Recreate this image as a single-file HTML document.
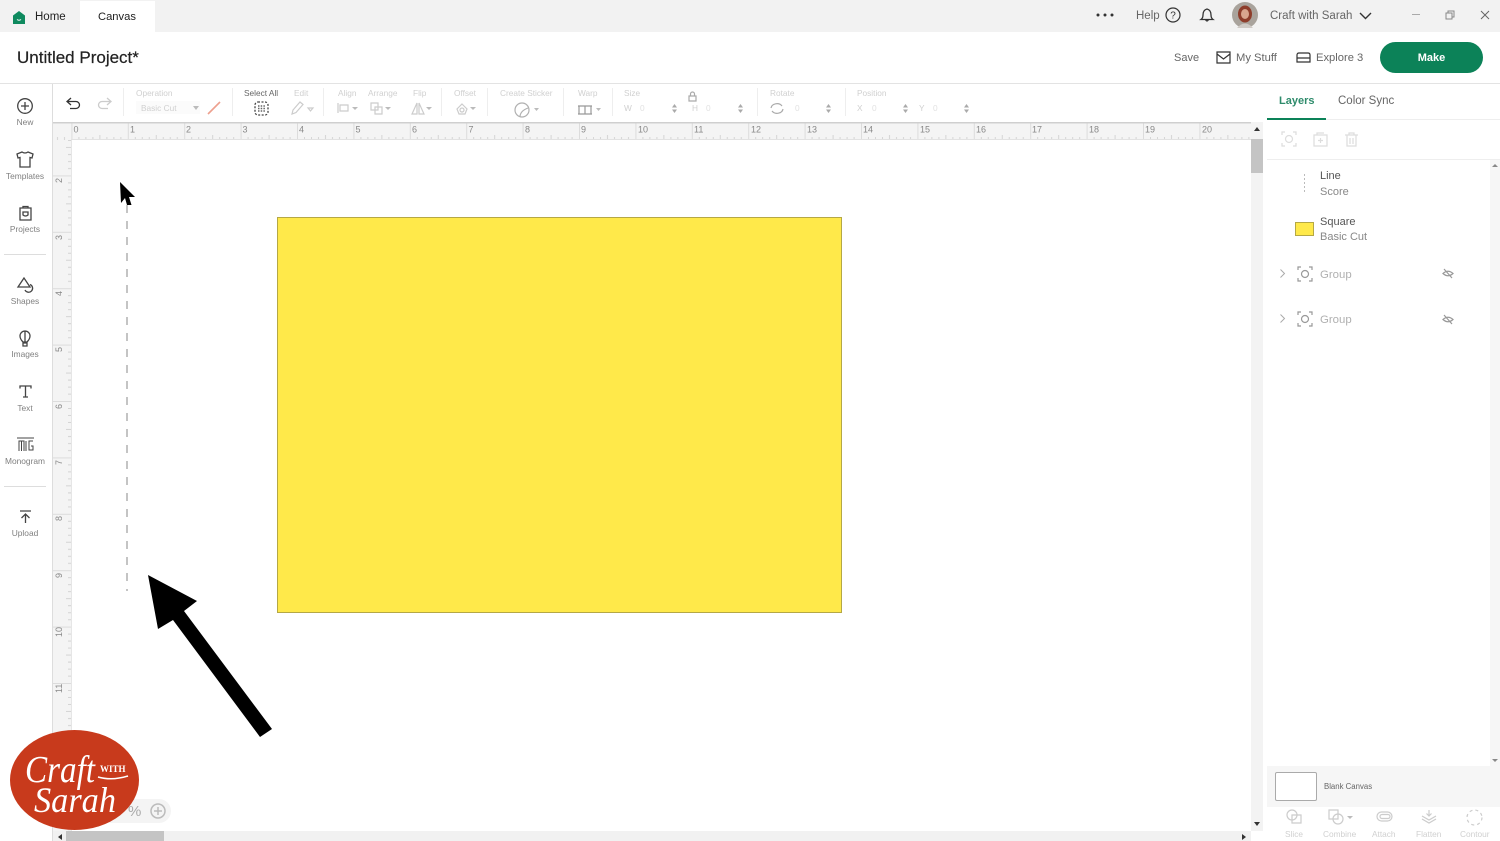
<!DOCTYPE html>
<html><head><meta charset="utf-8"><title>Untitled Project</title>
<style>
html,body{margin:0;padding:0;background:#fff}
body{width:1500px;height:841px;position:relative;overflow:hidden;font-family:"Liberation Sans",sans-serif}
.a{position:absolute}
.t{position:absolute;white-space:nowrap;line-height:1}
.lab{position:absolute;white-space:nowrap;line-height:1;font-size:8.400px;color:#808080;width:50px;left:0;text-align:center}
.tb{position:absolute;white-space:nowrap;line-height:1;font-size:8.300px;color:#d0d0d0}
svg{position:absolute;overflow:visible}
.ic{fill:none;stroke:#444;stroke-width:1.300}
.ig{fill:none;stroke:#ccc;stroke-width:1.200}
</style></head><body>
<!-- top bar -->
<div class="a" style="left:0;top:0;width:1500px;height:32px;background:#f2f2f2"></div>
<div class="a" style="left:80px;top:1px;width:75px;height:31px;background:#fff"></div>
<svg style="left:12px;top:10px" width="15" height="15" viewBox="0 0 15 15"><path d="M1 5.500L7 1l6 4.500V14H1z" fill="#0f8a5f"/><path d="M5 9.500q2 1.500 4 0" stroke="#fff" fill="none"/></svg>
<div class="t" style="left:35px;top:12px;font-size:11.500px;color:#222">Home</div>
<div class="t" style="left:98px;top:12px;font-size:11.200px;color:#222">Canvas</div>
<svg style="left:1096px;top:12px" width="18" height="6"><circle cx="2" cy="3" r="1.500" fill="#333"/><circle cx="9" cy="3" r="1.500" fill="#333"/><circle cx="16" cy="3" r="1.500" fill="#333"/></svg>
<div class="t" style="left:1136px;top:11px;font-size:11.500px;color:#666">Help</div>
<svg style="left:1165px;top:7px" width="16" height="16"><circle cx="8" cy="8" r="7" fill="none" stroke="#333" stroke-width="1.200"/><text x="8" y="11.500" font-size="10" font-family="Liberation Sans" text-anchor="middle" fill="#333">?</text></svg>
<svg style="left:1199px;top:7px" width="16" height="16" viewBox="0 0 16 16"><path class="ic" style="stroke:#333" d="M2 12.500q2-1.500 2-4.500q0-5 4-6 4 1 4 6 0 3 2 4.500zM6.500 12.500q1.500 3 3 0"/></svg>
<svg style="left:1232px;top:2px" width="26" height="26"><circle cx="13" cy="13" r="13" fill="#a9a39c"/><ellipse cx="13" cy="12" rx="7" ry="8.500" fill="#8e3d2b"/><ellipse cx="13" cy="12" rx="4" ry="5" fill="#d9a58e"/><path d="M5 26q8-9 16 0z" fill="#cfcac5"/></svg>
<div class="t" style="left:1270px;top:11px;font-size:11.500px;color:#666">Craft with Sarah</div>
<svg style="left:1359px;top:12px" width="13" height="8"><path d="M1 1l5.500 5.500L12 1" fill="none" stroke="#333" stroke-width="1.400"/></svg>
<div class="a" style="left:1412px;top:14px;width:8px;height:1px;background:#aaa"></div>
<svg style="left:1445px;top:10px" width="10" height="10"><path d="M1 3h6v6H1zM3 3V1h6v6H7" fill="none" stroke="#888"/></svg>
<svg style="left:1480px;top:10px" width="10" height="10"><path d="M1 1l8 8M9 1l-8 8" stroke="#666" stroke-width="1"/></svg>
<!-- project header -->
<div class="a" style="left:0;top:83px;width:1500px;height:1px;background:#e3e3e3"></div>
<div class="t" style="left:17px;top:49px;font-size:17px;color:#222;-webkit-text-stroke:.2px #222">Untitled Project*</div>
<div class="t" style="left:1174px;top:53px;font-size:11px;color:#666">Save</div>
<svg style="left:1216px;top:51px" width="15" height="13"><path d="M1 1h13v11H1zM1 3l6.500 5L14 3" fill="none" stroke="#333" stroke-width="1.200"/></svg>
<div class="t" style="left:1236px;top:53px;font-size:11.200px;color:#666">My Stuff</div>
<svg style="left:1296px;top:52px" width="15" height="11"><path d="M1 3q0-2 2-2h9q2 0 2 2v7H1zM1 6h13" fill="none" stroke="#333" stroke-width="1.200"/></svg>
<div class="t" style="left:1316px;top:53px;font-size:11.200px;color:#666">Explore 3</div>
<div class="a" style="left:1380px;top:42px;width:103px;height:31px;border-radius:16px;background:#0c8258"></div>
<div class="t" style="left:1380px;top:53px;width:103px;text-align:center;font-size:11px;font-weight:bold;color:#fff">Make</div>
<!-- sidebar -->
<div class="a" style="left:52px;top:84px;width:1px;height:757px;background:#ddd"></div>
<svg style="left:17px;top:98px" width="16" height="16"><circle cx="8" cy="8" r="7.300" class="ic"/><path d="M8 4v8M4 8h8" class="ic"/></svg>
<div class="lab" style="top:118px">New</div>
<svg style="left:16px;top:151px" width="18" height="17" viewBox="0 0 18 17"><path class="ic" d="M6 1L1 3l1 4 2-.5V16h10V6.500l2 .5 1-4-5-2q-3 2-6 0z"/></svg>
<div class="lab" style="top:172px">Templates</div>
<svg style="left:19px;top:205px" width="13" height="16"><path class="ic" d="M1 3h11v12H1zM4 3V1.500h5V3M4 7h5v3q-2.500 2-5 0z"/></svg>
<div class="lab" style="top:225px">Projects</div>
<div class="a" style="left:4px;top:254px;width:42px;height:1px;background:#ddd"></div>
<svg style="left:17px;top:277px" width="18" height="17"><path class="ic" d="M7 1L1 10h12zM13 7.500a4 4 0 1 1-5 5.500"/></svg>
<div class="lab" style="top:297px">Shapes</div>
<svg style="left:19px;top:330px" width="12" height="17"><path class="ic" d="M6 1a5 5 0 0 1 5 5q0 3-3 6H4Q1 9 1 6a5 5 0 0 1 5-5zM6 1v11M4 13h4v3H4z"/></svg>
<div class="lab" style="top:350px">Images</div>
<svg style="left:19px;top:385px" width="13" height="13"><path d="M1 3.500V1h11v2.500M6.500 1v11M4 12h5" fill="none" stroke="#444" stroke-width="1.300"/></svg>
<div class="lab" style="top:404px">Text</div>
<svg style="left:17px;top:437px" width="17" height="15"><path d="M0 1h17M2 14V4h2.500v10M4.500 4H7v10M9 4v10M16 4h-4v9h4V9h-2" fill="none" stroke="#444" stroke-width="1"/></svg>
<div class="lab" style="top:457px">Monogram</div>
<div class="a" style="left:4px;top:486px;width:42px;height:1px;background:#ddd"></div>
<svg style="left:19px;top:510px" width="13" height="14"><path d="M1 1h11M6.500 13V4M2.500 8l4-4 4 4" fill="none" stroke="#444" stroke-width="1.300"/></svg>
<div class="lab" style="top:529px">Upload</div>
<!-- toolbar -->
<svg style="left:66px;top:97px" width="16" height="13"><path d="M5 1L1 4.500 5 8M1 4.500h9a3.500 3.500 0 0 1 0 7H4" fill="none" stroke="#333" stroke-width="1.300"/></svg>
<svg style="left:96px;top:97px" width="16" height="13"><path d="M11 1l4 3.500L11 8M15 4.500H6a3.500 3.500 0 0 0 0 7h6" fill="none" stroke="#ccc" stroke-width="1.300"/></svg>
<div class="a" style="left:123px;top:88px;width:1px;height:28px;background:#eee"></div>
<div class="tb" style="left:136px;top:89px">Operation</div>
<div class="a" style="left:136px;top:101px;width:64px;height:13px;background:#fbfbfb"></div>
<div class="tb" style="left:141px;top:104px">Basic Cut</div>
<svg style="left:193px;top:106px" width="6" height="4"><path d="M0 0h6L3 4z" fill="#bbb"/></svg>
<svg style="left:207px;top:101px" width="14" height="14"><path d="M1 13L13 1" stroke="#eda08e" stroke-width="1.600"/></svg>
<div class="a" style="left:232px;top:88px;width:1px;height:28px;background:#eee"></div>
<div class="tb" style="left:244px;top:89px;color:#666">Select All</div>
<svg style="left:254px;top:101px" width="15" height="15"><rect x="1" y="1" width="13" height="13" rx="3" fill="none" stroke="#444" stroke-width="1.300" stroke-dasharray="2 1.500"/><path d="M4 5h7M4 7.500h7M4 10h7" stroke="#666" stroke-width="1.400" stroke-dasharray="1.500 1.200"/></svg>
<div class="tb" style="left:294px;top:89px">Edit</div>
<svg style="left:291px;top:101px" width="22" height="14"><path class="ig" d="M1 13l1-4 7-8 3 2.500-7 8zM17 7h5l-2.500 3z"/></svg>
<div class="a" style="left:323px;top:88px;width:1px;height:28px;background:#eee"></div>
<div class="tb" style="left:338px;top:89px">Align</div>
<svg style="left:337px;top:102px" width="21" height="12"><path class="ig" d="M1 1v10M3 3h8v6H3z"/><path d="M15 5h6l-3 3z" fill="#bbb"/></svg>
<div class="tb" style="left:368px;top:89px">Arrange</div>
<svg style="left:370px;top:102px" width="21" height="13"><path class="ig" d="M1 1h7v7H1zM5 5h7v7H5z"/><path d="M15 5h6l-3 3z" fill="#bbb"/></svg>
<div class="tb" style="left:413px;top:89px">Flip</div>
<svg style="left:411px;top:102px" width="21" height="13"><path class="ig" d="M6 1L1 12h5zM8 1l5 11H8z"/><path d="M15 5h6l-3 3z" fill="#bbb"/></svg>
<div class="a" style="left:441px;top:88px;width:1px;height:28px;background:#eee"></div>
<div class="tb" style="left:454px;top:89px">Offset</div>
<svg style="left:455px;top:102px" width="21" height="13"><path class="ig" d="M7 2l5 5-2 5H4L2 7z"/><circle cx="7" cy="8" r="2" class="ig"/><path d="M15 5h6l-3 3z" fill="#bbb"/></svg>
<div class="a" style="left:487px;top:88px;width:1px;height:28px;background:#eee"></div>
<div class="tb" style="left:500px;top:89px">Create Sticker</div>
<svg style="left:514px;top:102px" width="26" height="15"><circle cx="8" cy="8" r="7" class="ig" style="stroke:#b0b0b0"/><path class="ig" style="stroke:#b0b0b0" d="M6 15q0-6 8-9"/><path d="M20 6h5l-2.500 3z" fill="#bbb"/></svg>
<div class="a" style="left:563px;top:88px;width:1px;height:28px;background:#eee"></div>
<div class="tb" style="left:578px;top:89px">Warp</div>
<svg style="left:577px;top:105px" width="25" height="10"><path class="ig" style="stroke:#999" d="M1 1h14M1 9h14M2 1v8M8 1v8M14 1v8"/><path d="M19 3h5l-2.500 3z" fill="#bbb"/></svg>
<div class="a" style="left:612px;top:88px;width:1px;height:28px;background:#eee"></div>
<div class="tb" style="left:624px;top:89px">Size</div>
<svg style="left:688px;top:91px" width="9" height="11"><path d="M1 5h7v5H1zM2.500 5V3a2 2 0 0 1 4 0v2" class="ig" style="stroke:#aaa"/></svg>
<div class="tb" style="left:624px;top:104px">W</div><div class="tb" style="left:640px;top:104px;color:#e2e2e2">0</div>
<div class="tb" style="left:692px;top:104px">H</div><div class="tb" style="left:706px;top:104px;color:#e2e2e2">0</div>
<svg style="left:672px;top:104px" width="5" height="9"><path d="M0 3.500L2.500 0 5 3.500zM0 5.500L2.500 9 5 5.500z" fill="#aaa"/></svg>
<svg style="left:738px;top:104px" width="5" height="9"><path d="M0 3.500L2.500 0 5 3.500zM0 5.500L2.500 9 5 5.500z" fill="#aaa"/></svg>
<div class="a" style="left:757px;top:88px;width:1px;height:28px;background:#eee"></div>
<div class="tb" style="left:770px;top:89px">Rotate</div>
<svg style="left:770px;top:102px" width="14" height="13"><path class="ig" style="stroke:#aaa" d="M1 6a6 5 0 0 1 11-2M13 7a6 5 0 0 1-11 2"/></svg>
<div class="tb" style="left:795px;top:104px;color:#e2e2e2">0</div>
<svg style="left:826px;top:104px" width="5" height="9"><path d="M0 3.500L2.500 0 5 3.500zM0 5.500L2.500 9 5 5.500z" fill="#aaa"/></svg>
<div class="a" style="left:845px;top:88px;width:1px;height:28px;background:#eee"></div>
<div class="tb" style="left:857px;top:89px">Position</div>
<div class="tb" style="left:857px;top:104px">X</div><div class="tb" style="left:872px;top:104px;color:#e2e2e2">0</div>
<svg style="left:903px;top:104px" width="5" height="9"><path d="M0 3.500L2.500 0 5 3.500zM0 5.500L2.500 9 5 5.500z" fill="#aaa"/></svg>
<div class="tb" style="left:919px;top:104px">Y</div><div class="tb" style="left:933px;top:104px;color:#e2e2e2">0</div>
<svg style="left:964px;top:104px" width="5" height="9"><path d="M0 3.500L2.500 0 5 3.500zM0 5.500L2.500 9 5 5.500z" fill="#aaa"/></svg>
<!-- rulers -->
<svg style="left:53px;top:122px" width="1198" height="719" viewBox="0 0 1198 719" font-family="Liberation Sans" font-size="9" fill="#888">
<defs>
<pattern id="h" x="18.400" y="0" width="56.400" height="18" patternUnits="userSpaceOnUse"><path d="M.5 0v18" stroke="#dcdcdc"/><path d="M7.500 15v3M14.500 15v3M21.500 15v3M28.500 13v5M35.500 15v3M42.500 15v3M49.500 15v3" stroke="#d4d4d4"/></pattern>
<pattern id="v" x="0" y="-3" width="18" height="56.400" patternUnits="userSpaceOnUse"><path d="M0 .5h18" stroke="#dcdcdc"/><path d="M15 7.500h3M15 14.500h3M15 21.500h3M13 28.500h5M15 35.500h3M15 42.500h3M15 49.500h3" stroke="#d4d4d4"/></pattern>
</defs>
<rect width="1198" height="18" fill="#f4f4f4"/><rect width="1198" height="18" fill="url(#h)"/>
<rect y="18" width="18" height="701" fill="#f4f4f4"/><rect y="18" width="18" height="701" fill="url(#v)"/>
<rect width="1198" height="1.500" fill="#cfcfcf"/><rect y="17" x="18" width="1180" height="1" fill="#e2e2e2"/><rect x="18" y="18" width="1" height="701" fill="#e6e6e6"/>
<text x="20.500" y="10.500">0</text><text x="77" y="10.500">1</text><text x="133" y="10.500">2</text><text x="189.500" y="10.500">3</text><text x="246" y="10.500">4</text><text x="302.500" y="10.500">5</text><text x="359" y="10.500">6</text><text x="415.500" y="10.500">7</text><text x="472" y="10.500">8</text><text x="528" y="10.500">9</text><text x="585" y="10.500">10</text><text x="641" y="10.500">11</text><text x="698" y="10.500">12</text><text x="754" y="10.500">13</text><text x="810" y="10.500">14</text><text x="867" y="10.500">15</text><text x="923" y="10.500">16</text><text x="979" y="10.500">17</text><text x="1036" y="10.500">18</text><text x="1092" y="10.500">19</text><text x="1149" y="10.500">20</text>
<text transform="translate(9,61) rotate(-90)">2</text><text transform="translate(9,118) rotate(-90)">3</text><text transform="translate(9,174) rotate(-90)">4</text><text transform="translate(9,230) rotate(-90)">5</text><text transform="translate(9,287) rotate(-90)">6</text><text transform="translate(9,343) rotate(-90)">7</text><text transform="translate(9,399) rotate(-90)">8</text><text transform="translate(9,456) rotate(-90)">9</text><text transform="translate(9,515) rotate(-90)">10</text><text transform="translate(9,571) rotate(-90)">11</text>
</svg>
<!-- canvas scrollbars -->
<div class="a" style="left:1251px;top:122px;width:12px;height:709px;background:#f3f3f3"></div>
<div class="a" style="left:1251px;top:139px;width:12px;height:34px;background:#c4c4c4"></div>
<svg style="left:1254px;top:127px" width="6" height="4"><path d="M0 4L3 0l3 4z" fill="#333"/></svg>
<svg style="left:1254px;top:822px" width="6" height="4"><path d="M0 0l3 4 3-4z" fill="#333"/></svg>
<div class="a" style="left:53px;top:831px;width:1198px;height:10px;background:#f1f1f1"></div>
<div class="a" style="left:66px;top:831px;width:98px;height:10px;background:#c4c4c4"></div>
<svg style="left:58px;top:834px" width="4" height="6"><path d="M4 0L0 3l4 3z" fill="#333"/></svg>
<svg style="left:1242px;top:834px" width="4" height="6"><path d="M0 0l4 3-4 3z" fill="#333"/></svg>
<!-- canvas content -->
<div class="a" style="left:277px;top:217px;width:563px;height:394px;background:#ffe94a;border:1px solid #b5a845"></div>
<div class="a" style="left:126px;top:205px;width:2px;height:386px;background:repeating-linear-gradient(#c4c4c4 0 8px,transparent 8px 16px)"></div>
<svg style="left:0;top:0" width="1500" height="841">
<path d="M120 182L135 197 129 197 131.500 205 127 205 125 198 121 203z" fill="#000"/>
<path d="M148 575L197 601 184 611 272 729 260 737 173 620 158 629z" fill="#000"/>
</svg>
<!-- right panel -->
<div class="t" style="left:1279px;top:96px;font-size:11px;font-weight:bold;color:#2e8b6b">Layers</div>
<div class="t" style="left:1338px;top:96px;font-size:11.500px;color:#666">Color Sync</div>
<div class="a" style="left:1267px;top:118px;width:59px;height:2px;background:#0c8258"></div>
<div class="a" style="left:1326px;top:119px;width:174px;height:1px;background:#eee"></div>
<svg style="left:1281px;top:131px" width="16" height="16"><path class="ig" style="stroke:#ddd" d="M1 4V1h3M12 1h3v3M15 12v3h-3M4 15H1v-3"/><circle cx="8" cy="8" r="3.500" class="ig" style="stroke:#ddd"/></svg>
<svg style="left:1313px;top:132px" width="15" height="15"><path class="ig" style="stroke:#ddd" d="M1 3h13v11H1zM4 3V1h7M7.500 6v5M5 8.500h5"/></svg>
<svg style="left:1344px;top:132px" width="15" height="15"><path class="ig" style="stroke:#ddd" d="M1 3h13M3 3v11h9V3M5 3V1h5v2M6 6v6M9 6v6"/></svg>
<div class="a" style="left:1267px;top:159px;width:233px;height:1px;background:#eee"></div>
<div class="a" style="left:1490px;top:160px;width:10px;height:606px;background:#f6f6f6"></div>
<svg style="left:1492px;top:164px" width="6" height="3"><path d="M0 3l3-3 3 3z" fill="#888"/></svg>
<svg style="left:1492px;top:759px" width="6" height="3"><path d="M0 0l3 3 3-3z" fill="#888"/></svg>
<div class="a" style="left:1304px;top:174px;width:1px;height:18px;background:repeating-linear-gradient(#bbb 0 2px,transparent 2px 4px)"></div>
<div class="t" style="left:1320px;top:171px;font-size:11px;color:#555">Line</div>
<div class="t" style="left:1320px;top:187px;font-size:11px;color:#888">Score</div>
<div class="a" style="left:1295px;top:222px;width:17px;height:12px;background:#ffe94a;border:1px solid #b5a845"></div>
<div class="t" style="left:1320px;top:217px;font-size:11px;color:#555">Square</div>
<div class="t" style="left:1320px;top:232px;font-size:11px;color:#888">Basic Cut</div>
<svg style="left:1280px;top:269px" width="5" height="9"><path d="M.5.500l4 4-4 4" fill="none" stroke="#aaa"/></svg>
<svg style="left:1297px;top:266px" width="16" height="16"><path class="ig" style="stroke:#999" d="M1 4V1h3M12 1h3v3M15 12v3h-3M4 15H1v-3"/><circle cx="8" cy="8" r="3.500" class="ig" style="stroke:#999"/></svg>
<div class="t" style="left:1320px;top:270px;font-size:11.400px;color:#b0b0b0">Group</div>
<svg style="left:1442px;top:268px" width="12" height="11"><path class="ig" style="stroke:#999" d="M1 5.500Q6 1 11 5.500 6 10 1 5.500zM2 1l8 9"/></svg>
<svg style="left:1280px;top:314px" width="5" height="9"><path d="M.5.500l4 4-4 4" fill="none" stroke="#aaa"/></svg>
<svg style="left:1297px;top:311px" width="16" height="16"><path class="ig" style="stroke:#999" d="M1 4V1h3M12 1h3v3M15 12v3h-3M4 15H1v-3"/><circle cx="8" cy="8" r="3.500" class="ig" style="stroke:#999"/></svg>
<div class="t" style="left:1320px;top:315px;font-size:11.400px;color:#b0b0b0">Group</div>
<svg style="left:1442px;top:314px" width="12" height="11"><path class="ig" style="stroke:#999" d="M1 5.500Q6 1 11 5.500 6 10 1 5.500zM2 1l8 9"/></svg>
<!-- blank canvas -->
<div class="a" style="left:1267px;top:766px;width:233px;height:41px;background:#f6f6f6"></div>
<div class="a" style="left:1275px;top:772px;width:40px;height:27px;background:#fff;border:1px solid #aaa;border-radius:2px"></div>
<div class="t" style="left:1324px;top:783px;font-size:7.800px;color:#666">Blank Canvas</div>
<svg style="left:1286px;top:809px" width="16" height="15"><circle cx="6" cy="6" r="5" class="ig"/><path class="ig" d="M6 6h9v8H6z"/></svg>
<div class="tb" style="left:1285px;top:830px">Slice</div>
<svg style="left:1328px;top:809px" width="26" height="16"><path class="ig" d="M1 1h9v9H1z"/><circle cx="10" cy="10" r="5" class="ig"/><path d="M19 7h6l-3 3z" fill="#bbb"/></svg>
<div class="tb" style="left:1323px;top:830px">Combine</div>
<svg style="left:1376px;top:811px" width="17" height="11"><rect x="1" y="1" width="15" height="9" rx="4.500" class="ig"/><rect x="4" y="3.500" width="10" height="4" rx="2" class="ig"/></svg>
<div class="tb" style="left:1372px;top:830px">Attach</div>
<svg style="left:1421px;top:809px" width="16" height="16"><path class="ig" d="M8 1v6M5.500 4.500L8 7l2.500-2.500M1 7l7 4 7-4M1 10l7 4 7-4"/></svg>
<div class="tb" style="left:1416px;top:830px">Flatten</div>
<svg style="left:1466px;top:809px" width="17" height="17"><circle cx="8.500" cy="8.500" r="7.500" class="ig" stroke-dasharray="3 3"/></svg>
<div class="tb" style="left:1460px;top:830px">Contour</div>
<!-- zoom control + logo -->
<div class="a" style="left:100px;top:799px;width:71px;height:24px;border-radius:12px;background:#f4f4f4"></div>
<div class="t" style="left:128px;top:804px;font-size:15px;color:#aaa">%</div>
<svg style="left:150px;top:803px" width="16" height="16"><circle cx="8" cy="8" r="7" fill="none" stroke="#bbb" stroke-width="1.500"/><path d="M8 4v8M4 8h8" stroke="#bbb" stroke-width="1.500"/></svg>
<svg style="left:0;top:720px" width="150" height="121">
<ellipse cx="74.500" cy="60" rx="64.500" ry="50" fill="#c83a1c"/>
<text x="25" y="62" font-family="Liberation Serif" font-style="italic" font-size="38" fill="#fff" textLength="70" lengthAdjust="spacingAndGlyphs">Craft</text>
<text x="100" y="52" font-family="Liberation Serif" font-weight="bold" font-size="9" fill="#fff">WITH</text>
<path d="M98 57q14 4 30-1" stroke="#fff" stroke-width="1.500" fill="none"/>
<text x="34" y="92" font-family="Liberation Serif" font-style="italic" font-size="36" fill="#fff" textLength="82" lengthAdjust="spacingAndGlyphs">Sarah</text>
</svg>
</body></html>
